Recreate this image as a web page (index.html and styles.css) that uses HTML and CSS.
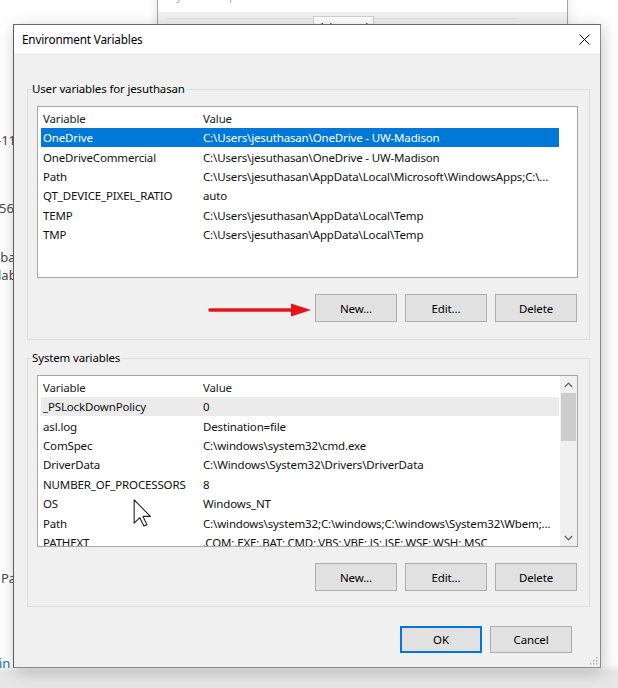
FILE: index.html
```html
<!DOCTYPE html>
<html>
<head>
<meta charset="utf-8">
<link rel="stylesheet" href="styles.css">
</head>
<body>
<div class="desktop">
  <div class="page">
    <div class="frag f1">-11</div>
    <div class="frag f2">56l</div>
    <div class="frag f3">-ba</div>
    <div class="frag f4">lab</div>
    <div class="frag f5">Pa</div>
    <div class="frag f6 link">in</div>
  </div>

  <div class="bgwin">
    <div class="bgwin-title"><span>System Properties</span><span class="bgx">✕</span></div>
    <div class="bgwin-tabs">
      <span class="tab">Computer Name</span>
      <span class="tab">Hardware</span>
      <span class="tab active">Advanced</span>
      <span class="tab">System Protection</span>
      <span class="tab">Remote</span>
    </div>
  </div>

  <div class="dialog">
    <div class="titlebar">
      <span class="title">Environment Variables</span>
      <svg class="close" width="11" height="11" viewBox="0 0 11 11"><path d="M0.5 0.5 L10.5 10.5 M10.5 0.5 L0.5 10.5" stroke="#000" stroke-width="1" fill="none"/></svg>
    </div>
    <div class="dlg-body">
      <fieldset class="group user">
        <legend>User variables for jesuthasan</legend>
        <div class="listbox">
          <div class="list-main">
            <div class="row head"><span class="c1">Variable</span><span class="c2">Value</span></div>
            <div class="row sel"><span class="c1">OneDrive</span><span class="c2">C:\Users\jesuthasan\OneDrive - UW-Madison</span></div>
            <div class="row"><span class="c1">OneDriveCommercial</span><span class="c2">C:\Users\jesuthasan\OneDrive - UW-Madison</span></div>
            <div class="row"><span class="c1">Path</span><span class="c2">C:\Users\jesuthasan\AppData\Local\Microsoft\WindowsApps;C:\...</span></div>
            <div class="row"><span class="c1">QT_DEVICE_PIXEL_RATIO</span><span class="c2">auto</span></div>
            <div class="row"><span class="c1">TEMP</span><span class="c2">C:\Users\jesuthasan\AppData\Local\Temp</span></div>
            <div class="row"><span class="c1">TMP</span><span class="c2">C:\Users\jesuthasan\AppData\Local\Temp</span></div>
          </div>
        </div>
        <div class="btnrow">
          <button class="btn">New...</button>
          <button class="btn">Edit...</button>
          <button class="btn">Delete</button>
        </div>
      </fieldset>

      <fieldset class="group system">
        <legend>System variables</legend>
        <div class="listbox">
          <div class="list-main">
            <div class="row head"><span class="c1">Variable</span><span class="c2">Value</span></div>
            <div class="row hover"><span class="c1">_PSLockDownPolicy</span><span class="c2">0</span></div>
            <div class="row"><span class="c1">asl.log</span><span class="c2">Destination=file</span></div>
            <div class="row"><span class="c1">ComSpec</span><span class="c2">C:\windows\system32\cmd.exe</span></div>
            <div class="row"><span class="c1">DriverData</span><span class="c2">C:\Windows\System32\Drivers\DriverData</span></div>
            <div class="row"><span class="c1">NUMBER_OF_PROCESSORS</span><span class="c2">8</span></div>
            <div class="row"><span class="c1">OS</span><span class="c2">Windows_NT</span></div>
            <div class="row"><span class="c1">Path</span><span class="c2">C:\windows\system32;C:\windows;C:\windows\System32\Wbem;...</span></div>
            <div class="row"><span class="c1">PATHEXT</span><span class="c2">.COM;.EXE;.BAT;.CMD;.VBS;.VBE;.JS;.JSE;.WSF;.WSH;.MSC</span></div>
          </div>
          <div class="scrollbar">
            <div class="sb-btn"><svg width="9" height="6" viewBox="0 0 9 6"><path d="M0.8 5 L4.5 1.2 L8.2 5" stroke="#606060" stroke-width="1.2" fill="none"/></svg></div>
            <div class="sb-thumb"></div>
            <div class="sb-track"></div>
            <div class="sb-btn"><svg width="9" height="6" viewBox="0 0 9 6"><path d="M0.8 1 L4.5 4.8 L8.2 1" stroke="#606060" stroke-width="1.2" fill="none"/></svg></div>
          </div>
        </div>
        <div class="btnrow">
          <button class="btn">New...</button>
          <button class="btn">Edit...</button>
          <button class="btn">Delete</button>
        </div>
      </fieldset>

      <div class="footer">
        <button class="btn ok">OK</button>
        <button class="btn">Cancel</button>
      </div>
    </div>
    <svg class="grip" width="8" height="8" viewBox="0 0 8 8">
      <rect x="6" y="0" width="1.5" height="1.5" fill="#b0b0b0"/>
      <rect x="3" y="3" width="1.5" height="1.5" fill="#b0b0b0"/>
      <rect x="6" y="3" width="1.5" height="1.5" fill="#b0b0b0"/>
      <rect x="0" y="6" width="1.5" height="1.5" fill="#b0b0b0"/>
      <rect x="3" y="6" width="1.5" height="1.5" fill="#b0b0b0"/>
      <rect x="6" y="6" width="1.5" height="1.5" fill="#b0b0b0"/>
    </svg>
  </div>

  <svg class="redarrow" width="108" height="16" viewBox="0 0 108 16">
    <path d="M3 8 L88 8" stroke="#e5141b" stroke-width="3.6" stroke-linecap="round"/>
    <path d="M84 1.5 L104 8 L84 14.5 Z" fill="#e5141b"/>
  </svg>

  <svg class="cursor" width="19" height="28" viewBox="0 0 12.5 19">
    <path d="M0.6 0.6 L0.6 16.4 L4.4 12.7 L7.2 18.4 L9.3 17.4 L6.6 11.8 L11.6 11.8 Z" fill="#fff" stroke="#222" stroke-width="0.75" stroke-linejoin="round"/>
  </svg>
</div>
</body>
</html>
```

FILE: styles.css
```css
* { box-sizing: border-box; }
html, body { margin: 0; padding: 0; }
body {
  width: 618px;
  height: 688px;
  overflow: hidden;
  font-family: "Noto Sans", "Open Sans", "DejaVu Sans", sans-serif;
  font-size: 11.5px;
  letter-spacing: -0.15px;
  color: #000;
}
.desktop {
  position: relative;
  width: 618px;
  height: 688px;
  overflow: hidden;
  background: linear-gradient(to bottom, #ffffff 0, #ffffff 664px, #e7e7e7 672px, #e7e7e7 100%);
}

/* background page text fragments */
.page {
  padding-top: 132px;
  font-size: 13px;
  letter-spacing: 0;
  color: #4a4a4a;
}
.frag { height: 16px; line-height: 16px; white-space: nowrap; margin-left: -3px; }
.f2 { margin-top: 52px; margin-left: -1px; }
.f3 { margin-top: 33px; margin-left: -4px; }
.f4 { margin-top: 2px; margin-left: -2px; }
.f5 { margin-top: 287px; margin-left: 1px; }
.f6 { margin-top: 69px; margin-left: -1px; }
.link { color: #1a6bb8; }

/* background window (System Properties) */
.bgwin {
  position: absolute;
  left: 157px;
  top: -20px;
  width: 411px;
  height: 62px;
  border: 1px solid #a3a3a3;
  background: #f0f0f0;
  box-shadow: 0 0 10px rgba(0,0,0,0.12);
}
.bgwin-title {
  height: 31px;
  background: #fff;
  display: flex;
  align-items: flex-end;
  justify-content: space-between;
  padding: 0 12px 8px 12px;
  color: #a8a8a8;
  line-height: 16px;
}
.bgx { color: #888; }
.bgwin-tabs {
  display: flex;
  padding: 6px 0 0 9px;
  font-size: 11px;
  color: #666;
}
.tab { padding: 3px 3px 0 3px; border-top: 1px solid #e2e2e2; white-space: nowrap; }
.tab.active { background: #fff; border: 1px solid #d0d0d0; border-bottom: none; color: #111; padding: 2px 5px 0 5px; margin-top: -2px; }

/* dialog */
.dialog {
  position: absolute;
  left: 13px;
  top: 24px;
  width: 588px;
  height: 644px;
  border: 1px solid #8a8a8a;
  border-left-color: #5a5a5a;
  border-top-color: #6a6a6a;
  background: #f0f0f0;
  box-shadow: 2px 4px 16px rgba(0,0,0,0.22);
  display: flex;
  flex-direction: column;
}
.titlebar {
  height: 28px;
  flex: none;
  background: #fff;
  display: flex;
  align-items: center;
  justify-content: space-between;
  padding: 0 10px 0 8px;
}
.title { line-height: 16px; font-size: 11.7px; }
.close { display: block; }

.dlg-body {
  flex: 1;
  display: flex;
  flex-direction: column;
  padding: 28px 10px 0 13px;
}

.group {
  margin: 0;
  border: 1px solid #dcdcdc;
  padding: 9px 11px 17px 9px;
  min-width: 0;
}
.group.system { margin-top: 10px; padding-bottom: 15px; }
.group legend {
  margin-left: -5px;
  padding: 0 2px 0 0;
  height: 16px;
  line-height: 16px;
}

.listbox {
  height: 172px;
  border: 1px solid #a6a6a6;
  background: #fff;
  display: flex;
  overflow: hidden;
}
.list-main { flex: 1; min-width: 0; overflow: hidden; }
.row {
  display: flex;
  align-items: center;
  width: 518px;
  height: 19.4px;
  margin-left: 3px;
  white-space: nowrap;
  color: #111;
}
.row.head { height: 21px; color: #222; padding-top: 1px; }
.c1 { width: 160px; flex: none; padding-left: 2px; overflow: hidden; }
.c2 { flex: 1; padding-left: 2px; overflow: hidden; }
.row.sel { background: #0078d7; color: #fff; }
.row.hover { background: #ebebeb; }

.scrollbar {
  width: 17px;
  flex: none;
  background: #f0f0f0;
  display: flex;
  flex-direction: column;
}
.sb-btn { height: 17px; display: flex; align-items: center; justify-content: center; }
.sb-thumb { height: 48px; margin: 0 1px; background: #cdcdcd; }
.sb-track { flex: 1; }

.btnrow {
  margin-top: 16px;
  display: flex;
  justify-content: flex-end;
  gap: 8px;
  padding-right: 1px;
}
.btn {
  width: 82px;
  height: 28px;
  margin: 0;
  padding: 0;
  font-family: inherit;
  font-size: 11.5px;
  letter-spacing: -0.15px;
  color: #000;
  background: #e1e1e1;
  border: 1px solid #adadad;
}
.footer {
  margin-top: 19px;
  display: flex;
  justify-content: flex-end;
  gap: 8px;
  padding-right: 18px;
}
.footer .btn { height: 27px; }
.btn.ok { border-color: #0078d7; box-shadow: inset 0 0 0 1px #0078d7; }

.grip { position: absolute; right: 2px; bottom: 2px; }

.redarrow { position: absolute; left: 207px; top: 302px; }
.cursor { position: absolute; left: 133px; top: 499px; }
```
